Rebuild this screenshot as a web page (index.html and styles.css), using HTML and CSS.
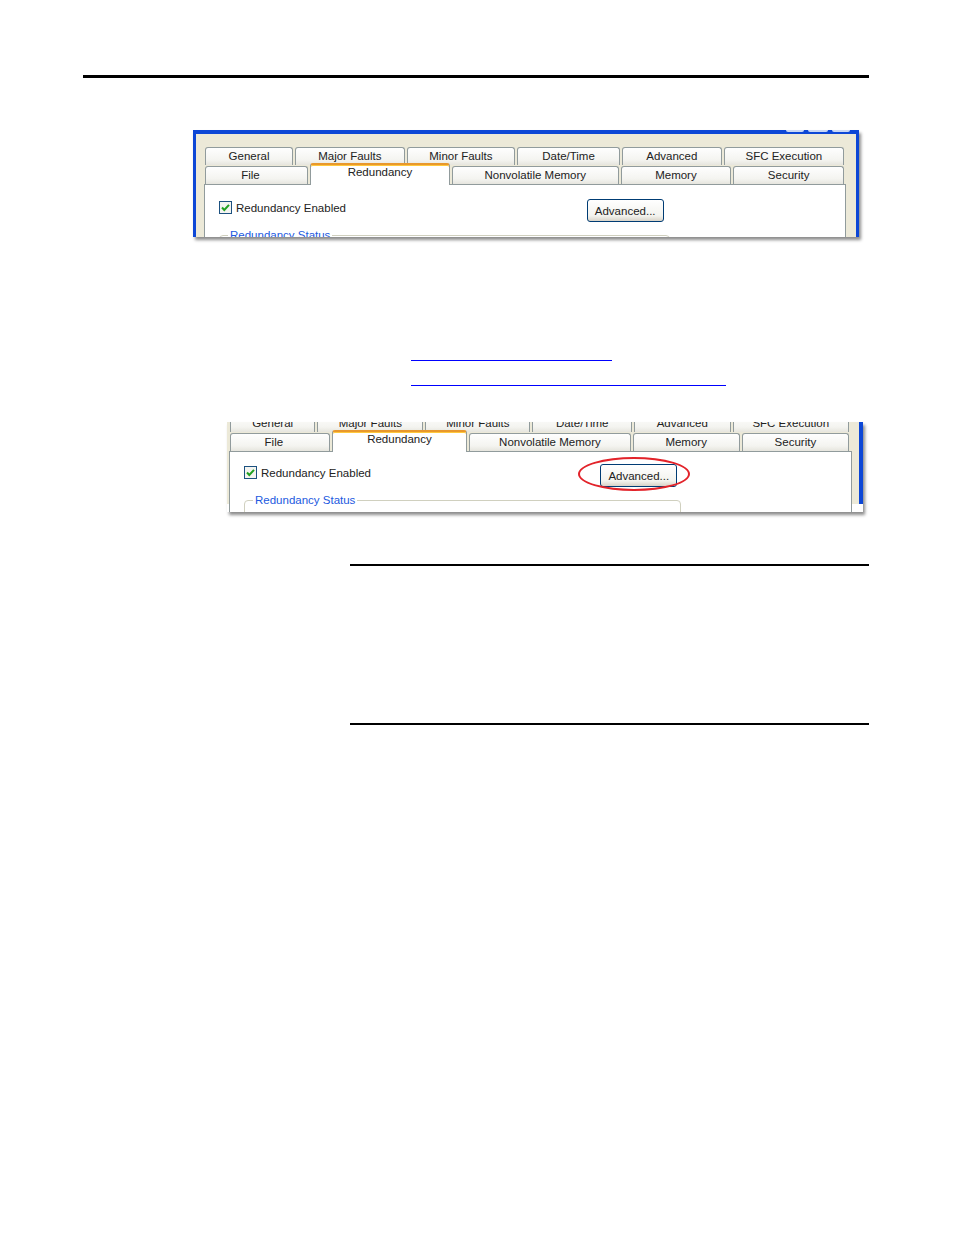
FILE: index.html
```html
<!doctype html>
<html>

<head>
    <title>Controller Properties - Redundancy</title>
    <link rel="stylesheet" href="styles.css">
</head>

<body>
    <div class="page">
        <div class="head-rule"></div>

        <div class="shot shot-top">
            <div class="titlebar">
                <span class="tb-btn"></span>
                <span class="tb-btn tb-wide"></span>
                <span class="tb-btn"></span>
            </div>
            <div class="frame">
                <div class="tabs-row">
                    <div class="tab t-general">General</div>
                    <div class="tab t-major">Major Faults</div>
                    <div class="tab t-minor">Minor Faults</div>
                    <div class="tab t-date">Date/Time</div>
                    <div class="tab t-adv">Advanced</div>
                    <div class="tab t-sfc">SFC Execution</div>
                </div>
                <div class="tabs-row">
                    <div class="tab t-file">File</div>
                    <div class="tab t-red on">Redundancy</div>
                    <div class="tab t-nv">Nonvolatile Memory</div>
                    <div class="tab t-mem">Memory</div>
                    <div class="tab t-sec">Security</div>
                </div>
                <div class="panel">
                    <div class="opt-row">
                        <label class="check">
                            <svg class="box" width="13" height="13" viewBox="0 0 13 13">
                                <rect x="0.5" y="0.5" width="12" height="12" fill="#f4f4f0" stroke="#1c5180"/>
                                <polyline points="3,6.5 5.3,9 10,3.8" fill="none" stroke="#21a121" stroke-width="2"/>
                            </svg>
                            Redundancy Enabled
                        </label>
                        <span class="btn-wrap"><button type="button" class="btn">Advanced...</button></span>
                    </div>
                    <fieldset class="group"><legend>Redundancy Status</legend></fieldset>
                </div>
            </div>
        </div>

        <div class="refs">
            <a href="#" class="ref ref-short"></a>
            <a href="#" class="ref ref-long"></a>
        </div>

        <div class="shot shot-bottom">
            <div class="frame">
                <div class="tabs">
                    <div class="tabs-row">
                        <div class="tab t-general">General</div>
                        <div class="tab t-major">Major Faults</div>
                        <div class="tab t-minor">Minor Faults</div>
                        <div class="tab t-date">Date/Time</div>
                        <div class="tab t-adv">Advanced</div>
                        <div class="tab t-sfc">SFC Execution</div>
                    </div>
                    <div class="tabs-row">
                        <div class="tab t-file">File</div>
                        <div class="tab t-red on">Redundancy</div>
                        <div class="tab t-nv">Nonvolatile Memory</div>
                        <div class="tab t-mem">Memory</div>
                        <div class="tab t-sec">Security</div>
                    </div>
                </div>
                <div class="panel">
                    <div class="opt-row">
                        <label class="check">
                            <svg class="box" width="13" height="13" viewBox="0 0 13 13">
                                <rect x="0.5" y="0.5" width="12" height="12" fill="#f4f4f0" stroke="#1c5180"/>
                                <polyline points="3,6.5 5.3,9 10,3.8" fill="none" stroke="#21a121" stroke-width="2"/>
                            </svg>
                            Redundancy Enabled
                        </label>
                        <span class="btn-wrap">
                            <button type="button" class="btn">Advanced...</button>
                            <span class="circle"></span>
                        </span>
                    </div>
                    <fieldset class="group"><legend>Redundancy Status</legend></fieldset>
                </div>
            </div>
        </div>

        <div class="note-rule"></div>
        <div class="note-rule note-end"></div>
    </div>
</body>

</html>
```

FILE: styles.css
```css
* {
    margin: 0;
}

body {
    background-color: white;
    font-family: "Liberation Sans", Arial, sans-serif;
    color: #222;
}

.head-rule {
    margin: 75px 0 0 83px;
    width: 786px;
    height: 3px;
    background-color: black;
}

/* dialog screenshots */
.shot {
    overflow: hidden;
    box-shadow: 2px 3px 3px rgba(0, 0, 0, 0.45);
    font-size: 11.5px;
}

.shot-top {
    margin: 52px 0 0 193px;
    width: 666px;
    height: 107px;
}

.shot-bottom {
    margin: 36px 0 0 227px;
    width: 636px;
    height: 90px;
}

.titlebar {
    height: 4px;
    background-color: #0d47d6;
    display: flex;
    justify-content: flex-end;
    gap: 4px;
    padding-right: 9px;
}

.tb-btn {
    width: 18px;
    height: 2px;
    background-color: #c9d7f5;
    border-radius: 0 0 2px 2px;
}

.tb-wide {
    width: 20px;
}

.frame {
    background-color: #ece9d8;
    height: 100%;
}

.shot-top .frame {
    border-left: 3px solid #0d47d6;
    border-right: 3px solid #0d47d6;
    padding: 13px 10px 0 8px;
}

.shot-bottom .frame {
    border-right: 4px solid #0d47d6;
    padding: 0 7px 0 2px;
}

.shot-bottom .tabs {
    margin-top: -8px;
}

/* tabs */
.tabs-row {
    display: flex;
    align-items: flex-end;
    gap: 2px;
    height: 18px;
    margin: 0 2px 0 1px;
}

.shot-bottom .tabs-row {
    margin: 0 3px 0 1px;
}

.tabs-row + .tabs-row {
    margin-top: 1px;
}

.tab {
    box-sizing: border-box;
    min-width: 0;
    height: 18px;
    border: 1px solid #919b9c;
    border-bottom: none;
    border-radius: 3px 3px 0 0;
    background: linear-gradient(#fefefe, #f4f4f0 70%, #e6e5de);
    text-align: center;
    line-height: 17px;
    white-space: nowrap;
}

.tab.on {
    position: relative;
    z-index: 1;
    height: 22px;
    margin-bottom: -1px;
    background: white;
    border-top: 2px solid #e8982c;
    box-shadow: inset 0 1px 0 #ffc83c;
    line-height: 15px;
}

.t-general { flex: 88 1 0; }
.t-major { flex: 110 1 0; }
.t-minor { flex: 109 1 0; }
.t-date { flex: 103 1 0; }
.t-adv { flex: 100 1 0; }
.t-sfc { flex: 121 1 0; }
.t-file { flex: 103 1 0; text-indent: -12px; }
.t-red { flex: 141 1 0; }
.t-nv { flex: 168 1 0; }
.t-mem { flex: 111 1 0; }
.t-sec { flex: 111 1 0; }

/* tab page */
.panel {
    background-color: white;
    border: 1px solid #919b9c;
    height: 120px;
    padding: 14px 14px 0 14px;
}

.shot-bottom .panel {
    padding-top: 12px;
}

.opt-row {
    display: grid;
    grid-template-columns: 60.1% auto;
    align-items: start;
    height: 23px;
}

.check {
    display: flex;
    align-items: center;
    gap: 4px;
    height: 13px;
    margin-top: 2px;
}

.box {
    display: block;
    flex: none;
}

.btn-wrap {
    position: relative;
    justify-self: start;
}

.btn {
    display: block;
    height: 23px;
    min-width: 75px;
    padding: 0 7px;
    border: 1px solid #003c74;
    border-radius: 3px;
    background: linear-gradient(#ffffff, #f3f3ee 75%, #d8d3c8);
    font-family: inherit;
    font-size: 11.5px;
    color: #222;
}

.shot-bottom .btn {
    min-width: 74px;
}

.circle {
    position: absolute;
    left: -22px;
    top: -7px;
    width: 112px;
    height: 34px;
    box-sizing: border-box;
    border: 2px solid #e2232a;
    border-radius: 50%;
}

.group {
    width: 73.7%;
    box-sizing: border-box;
    height: 40px;
    margin-top: 7px;
    padding: 0 8px;
    border: 1px solid #d0d0bf;
    border-radius: 4px;
}

.group legend {
    padding: 0 2px;
    line-height: 13px;
    color: #2259e0;
}

/* link underlines */
.refs {
    margin: 123px 0 0 411px;
}

.ref {
    display: block;
    height: 0;
    border-bottom: 1px solid #0000ff;
}

.ref-short {
    width: 201px;
}

.ref-long {
    width: 315px;
    margin-top: 24px;
}

.note-rule {
    margin: 52px 0 0 350px;
    width: 519px;
    height: 2px;
    background-color: black;
}

.note-end {
    margin-top: 157px;
}
```
